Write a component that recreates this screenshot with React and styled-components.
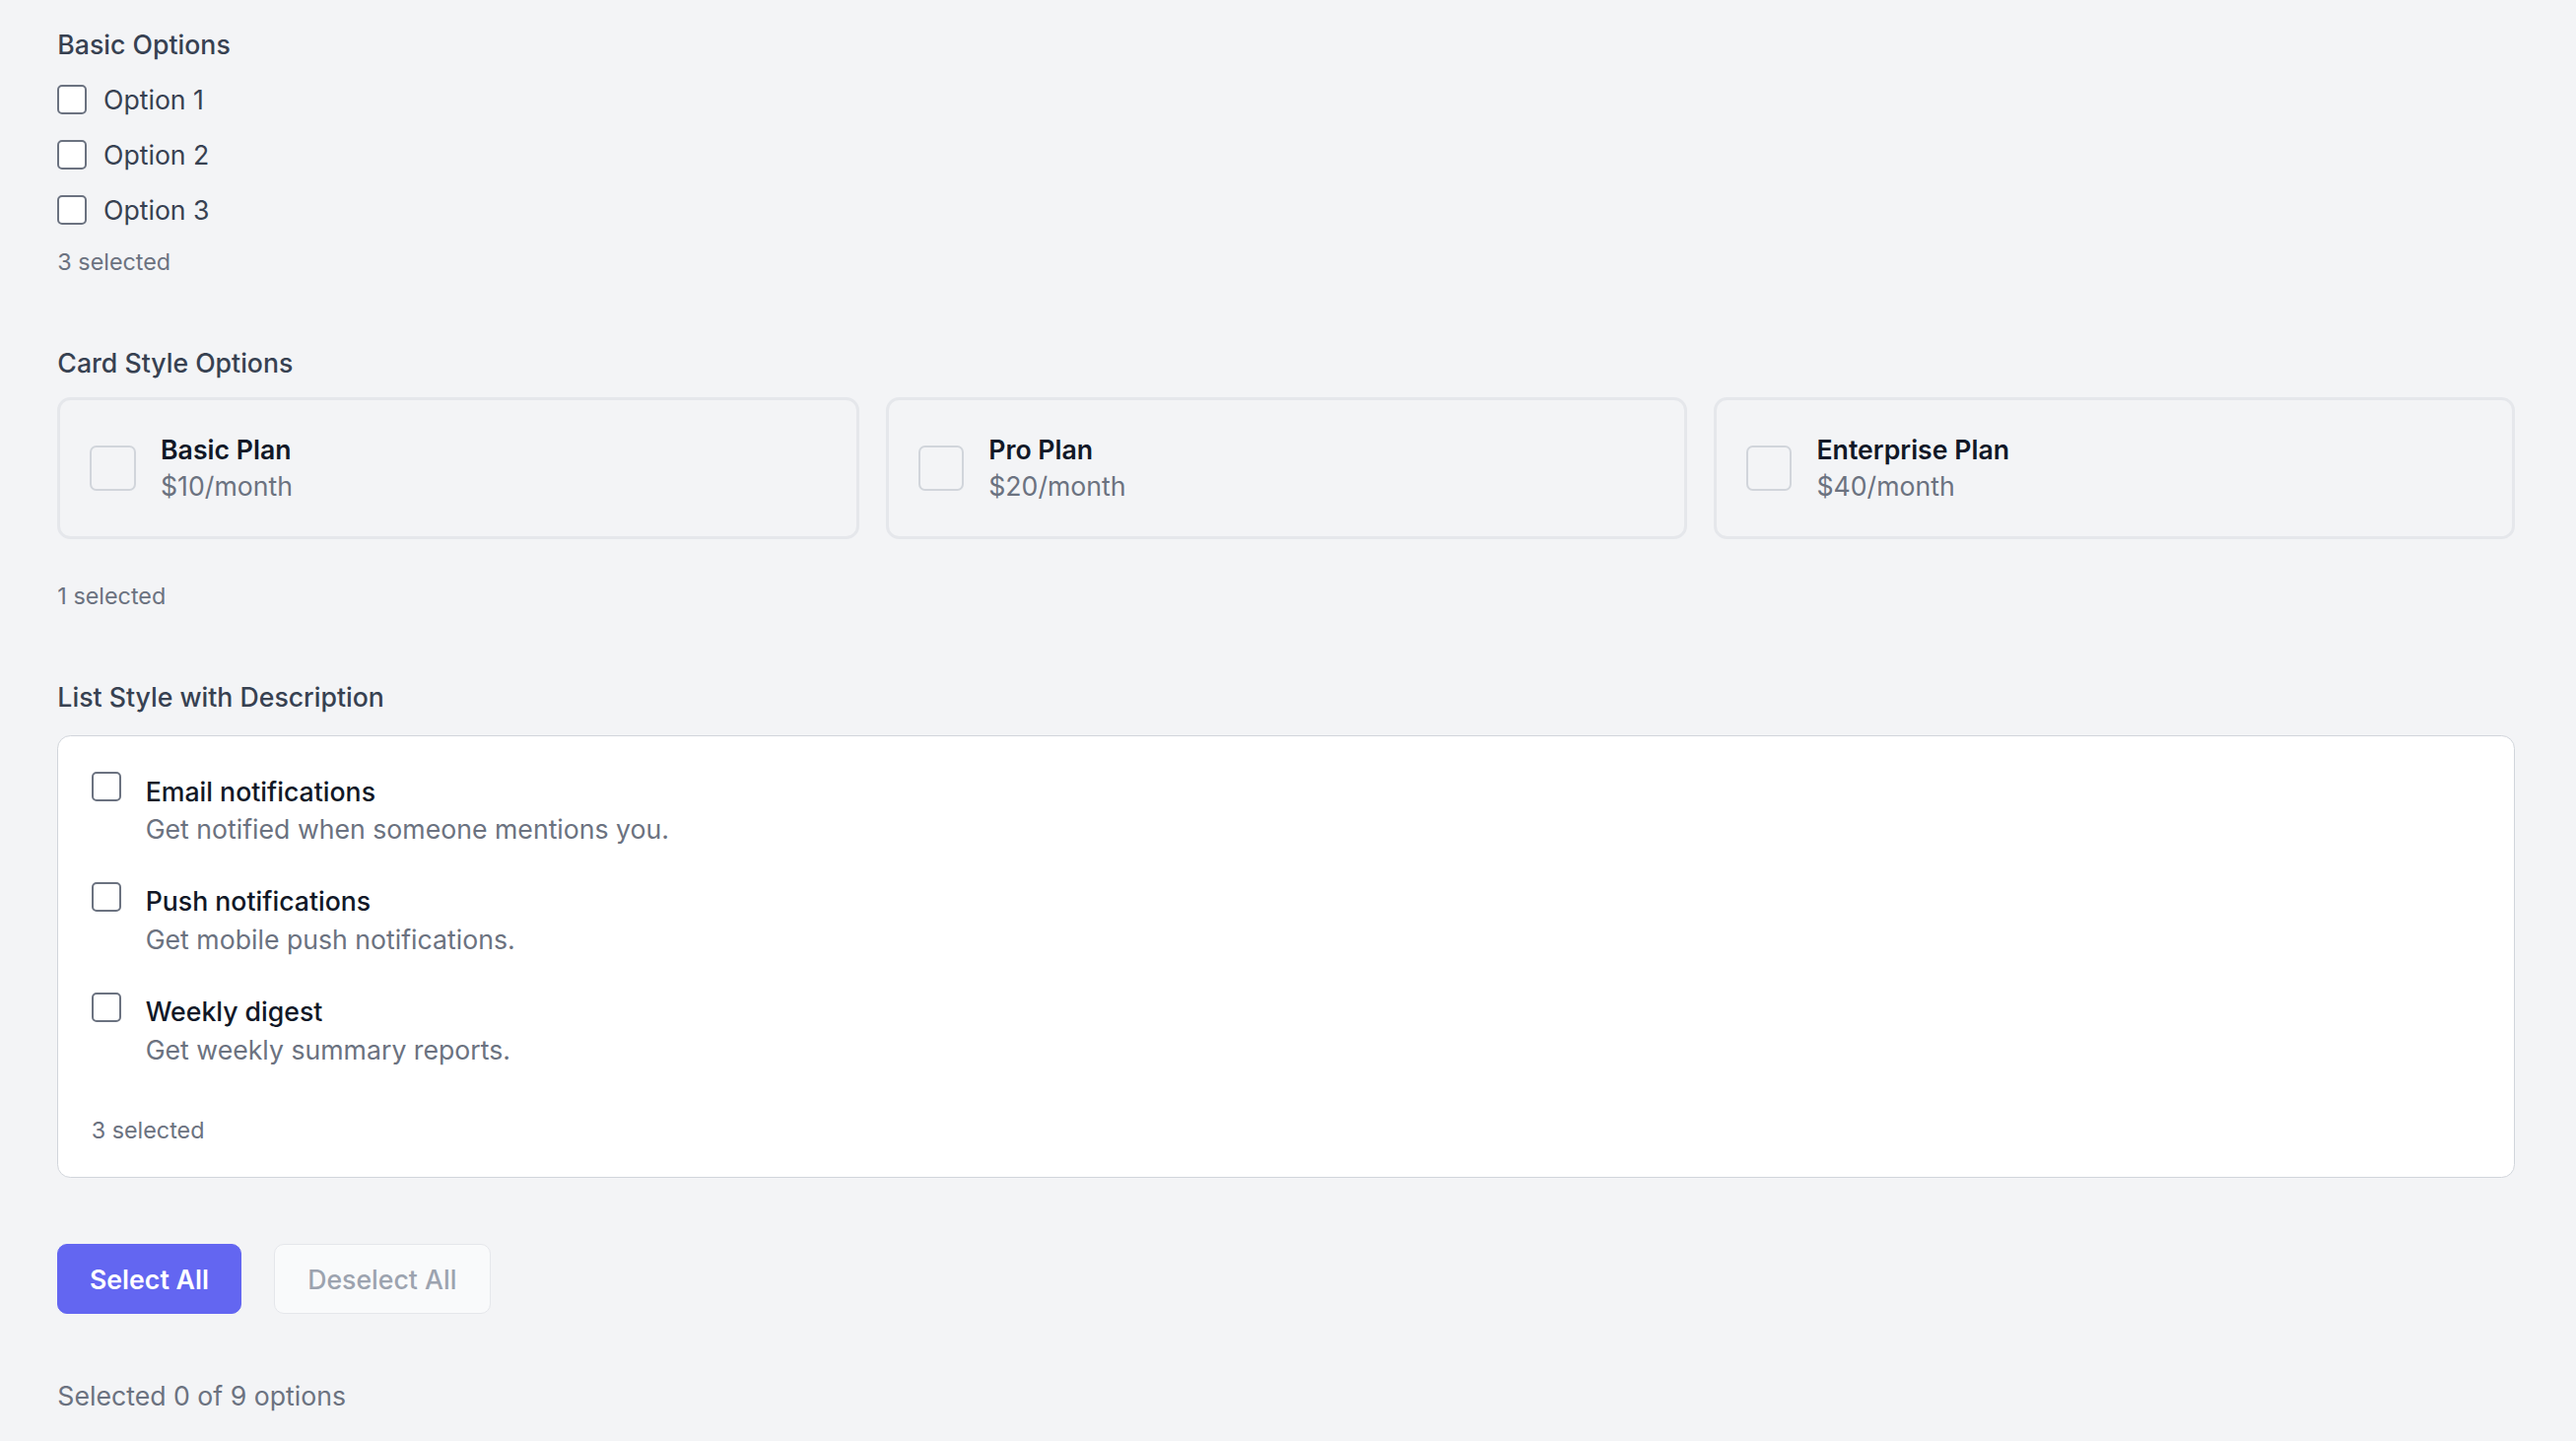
import React from "react";
import styled, { createGlobalStyle } from "styled-components";

const Global = createGlobalStyle`
  html, body { margin: 0; background: #f3f4f6; }
  body { font-family: Inter, "Noto Sans", sans-serif; -webkit-font-smoothing: antialiased; }
  #root { zoom: 1.6671; }
`;

const Page = styled.div`
  padding: 16px 37px 24px 35px;
  display: flex;
  flex-direction: column;
`;
const Section = styled.section`
  display: flex;
  flex-direction: column;
  margin-bottom: ${p => p.$mb || 40}px;
`;
const Title = styled.h3`
  margin: 0 0 10px;
  font-size: 16px;
  font-weight: 500;
  color: #374151;
  line-height: 22px;
`;
const Row = styled.label`
  display: flex;
  align-items: center;
  gap: 10px;
  height: 33.5px;
  font-size: 16px;
  color: #374151;
`;
const Box = styled.span`
  width: ${p => p.$size || 18}px;
  height: ${p => p.$size || 18}px;
  box-sizing: border-box;
  border: ${p => p.$light ? "1.5px solid #d1d5db" : "1.5px solid #6b7280"};
  border-radius: ${p => p.$light ? 4 : 3}px;
  background: #fff;
  flex-shrink: 0;
  background: ${p => p.$light ? "transparent" : "#fff"};
`;
const Count = styled.div`
  font-size: 14px;
  color: #6b7280;
  margin-top: ${p => p.$mt || 8}px;
`;
const Cards = styled.div`
  display: grid;
  grid-template-columns: repeat(3, 1fr);
  gap: 16px;
`;
const Card = styled.div`
  height: 86px;
  box-sizing: border-box;
  border: 2px solid #e5e7eb;
  border-radius: 8px;
  display: flex;
  align-items: center;
  padding: 0 18px;
  gap: 15px;
`;
const CardText = styled.div`
  display: flex;
  flex-direction: column;
  gap: 3px;
`;
const CardTitle = styled.div`
  font-size: 16px;
  font-weight: 600;
  color: #111827;
`;
const Price = styled.div`
  font-size: 16px;
  color: #6b7280;
`;
const List = styled.div`
  background: #fff;
  border: 1px solid #d1d5db;
  border-radius: 8px;
  padding: 22px 20px 20px;
  display: flex;
  flex-direction: column;
`;
const Item = styled.div`
  display: flex;
  gap: 15px;
  align-items: flex-start;
  height: 67px;
`;
const ItemText = styled.div`
  display: flex;
  flex-direction: column;
  gap: 4px;
  padding-top: 2px;
`;
const ItemTitle = styled.div`
  font-size: 16px;
  font-weight: 500;
  color: #111827;
`;
const Desc = styled.div`
  font-size: 16px;
  color: #6b7280;
`;
const Buttons = styled.div`
  display: flex;
  gap: 20px;
  margin-bottom: 40px;
`;
const Button = styled.button`
  height: 43px;
  padding: 0 ${p => p.$primary ? 19 : 20}px;
  border-radius: 6px;
  font-family: inherit;
  font-size: 16px;
  font-weight: ${p => p.$primary ? 600 : 500};
  border: 1px solid ${p => p.$primary ? "#6366f1" : "#e5e7eb"};
  background: ${p => p.$primary ? "#6366f1" : "#f9fafb"};
  color: ${p => p.$primary ? "#fff" : "#9ca3af"};
`;
const Footer = styled.div`
  font-size: 16px;
  color: #6b7280;
`;

export default function App() {
  return (
    <>
      <Global />
      <Page>
        <Section $mb={42}>
          <Title style={{ marginBottom: 6 }}>Basic Options</Title>
          {["Option 1", "Option 2", "Option 3"].map(o => (
            <Row key={o}><Box />{o}</Row>
          ))}
          <Count $mt={6}>3 selected</Count>
        </Section>
        <Section $mb={42}>
          <Title>Card Style Options</Title>
          <Cards>
            {[["Basic Plan", "$10/month"], ["Pro Plan", "$20/month"], ["Enterprise Plan", "$40/month"]].map(([t, p]) => (
              <Card key={t}>
                <Box $size={28} $light />
                <CardText><CardTitle>{t}</CardTitle><Price>{p}</Price></CardText>
              </Card>
            ))}
          </Cards>
          <Count $mt={26}>1 selected</Count>
        </Section>
        <Section $mb={40}>
          <Title style={{ marginBottom: 12 }}>List Style with Description</Title>
          <List>
            {[["Email notifications", "Get notified when someone mentions you."],
              ["Push notifications", "Get mobile push notifications."],
              ["Weekly digest", "Get weekly summary reports."]].map(([t, d]) => (
              <Item key={t}>
                <Box />
                <ItemText><ItemTitle>{t}</ItemTitle><Desc>{d}</Desc></ItemText>
              </Item>
            ))}
            <Count $mt={0}>3 selected</Count>
          </List>
        </Section>
        <Buttons>
          <Button $primary>Select All</Button>
          <Button>Deselect All</Button>
        </Buttons>
        <Footer>Selected 0 of 9 options</Footer>
      </Page>
    </>
  );
}
